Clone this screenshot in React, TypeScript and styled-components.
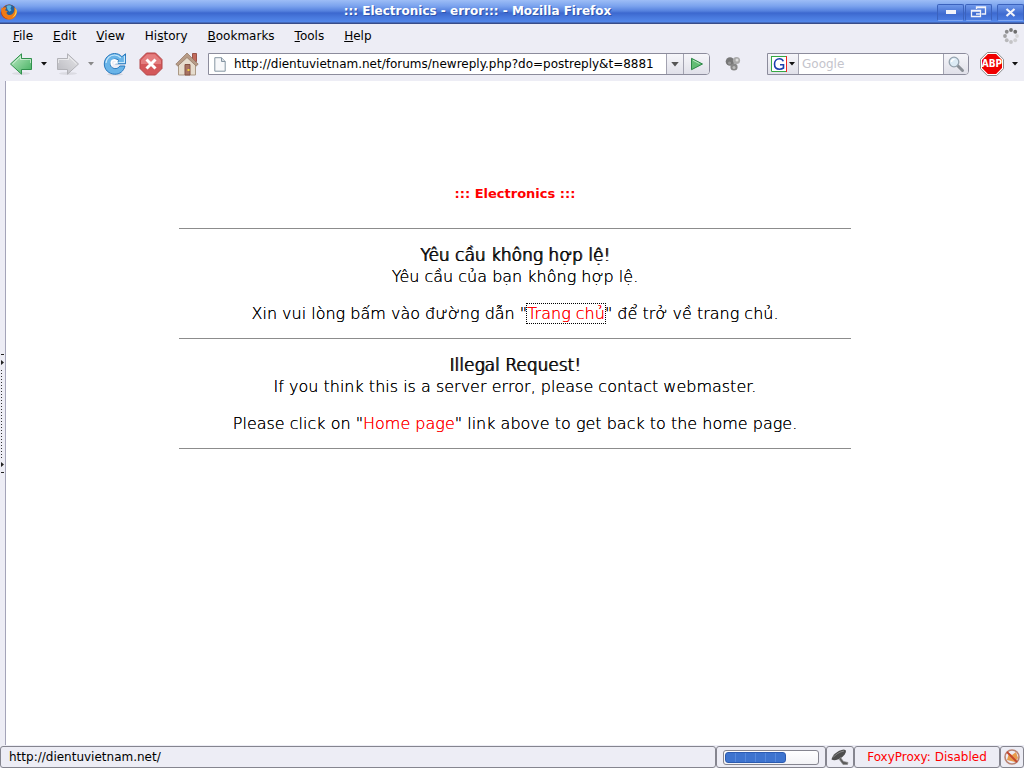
import React from "react";
import styled, { createGlobalStyle } from "styled-components";

const GlobalStyle = createGlobalStyle`
  *, *::before, *::after { box-sizing: border-box; }
  body { margin: 0; background: #ededf5; color: #000; font-family: "DejaVu Sans", sans-serif; font-size: 12px; }
  button, input { font: inherit; color: inherit; margin: 0; }
  h1, h2, p { margin: 0; font-size: inherit; }
`;

const Window = styled.div`
  display: flex;
  flex-direction: column;
  min-height: 100vh;
`;

const TitleBar = styled.header`
  display: flex;
  align-items: center;
  height: 24px;
  background: linear-gradient(#9dbdf6 0, #7ba3ee 6px, #5581de 11px, #3c68cf 13px, #4878dc 17px, #5287ea 22px, #384c88 23px);
`;

const WindowTitle = styled.h1`
  flex: 1;
  padding-bottom: 2px;
  text-align: center;
  font-size: 12px;
  line-height: 16px;
  color: #fff;
  text-shadow: 1px 1px 0 #2f55ad;
`;

const WindowButtons = styled.div`
  display: flex;
  gap: 1px;
`;

const WindowButton = styled.button<{ $gap?: boolean }>`
  display: flex;
  align-items: center;
  justify-content: center;
  width: 27px;
  height: 17px;
  margin-left: ${(p) => (p.$gap ? 4 : 0)}px;
  padding: 0;
  background: linear-gradient(#6f98ea, #3f6bd0 60%, #4c7de2);
  border: 1px solid #3b62bd;
  border-bottom-color: #7ea6f2;
  border-radius: 2px;
`;

const MenuBar = styled.nav`
  display: flex;
  align-items: center;
  height: 23px;
  padding: 0 5px 0 3px;
`;

const MenuItem = styled.button`
  padding: 0 10px;
  background: none;
  border: 0;
  line-height: 18px;
`;

const Spacer = styled.div`
  flex: 1;
`;

const ToolBar = styled.div`
  display: flex;
  align-items: center;
  height: 34px;
  padding: 0 3px 0 9px;
`;

const IconButton = styled.button<{ $w: number; $after?: number }>`
  display: flex;
  align-items: center;
  justify-content: center;
  flex: none;
  width: ${(p) => p.$w}px;
  height: 24px;
  margin-right: ${(p) => p.$after ?? 0}px;
  padding: 0;
  background: none;
  border: 0;
`;

const Field = styled.div`
  display: flex;
  align-items: stretch;
  height: 22px;
  background: #fff;
  border: 1px solid #8c8c9c;
  border-radius: 0 4px 4px 0;
  overflow: hidden;
`;

const AddressField = styled(Field)`
  flex: 1;
  margin-right: 14px;
`;

const SearchField = styled(Field)`
  width: 202px;
  margin: 0 11px 0 26px;
`;

const FieldIcon = styled.span`
  display: flex;
  align-items: center;
  justify-content: center;
  width: 22px;
`;

const TextInput = styled.input`
  flex: 1;
  min-width: 0;
  padding: 0 3px;
  background: none;
  border: 0;
  outline: 0;
  &::placeholder { color: #c4c4cc; opacity: 1; }
`;

const FieldButton = styled.button<{ $w: number; $side?: "left" }>`
  display: flex;
  align-items: center;
  justify-content: center;
  gap: 2px;
  flex: none;
  width: ${(p) => p.$w}px;
  padding: 0;
  background: linear-gradient(#f6f6fa, #e0e0e9);
  border: 0 solid #a2a2b0;
  border-width: ${(p) => (p.$side === "left" ? "0 1px 0 0" : "0 0 0 1px")};
`;

const Workspace = styled.div`
  display: flex;
  flex: 1;
`;

const SidebarGrip = styled.div`
  display: flex;
  align-items: center;
  width: 6px;
  border-right: 1px solid #a4a4b8;
`;

const Page = styled.main`
  flex: 1;
  padding-top: 104px;
  background: #fff;
  text-align: center;
`;

const Notice = styled.article`
  width: 66%;
  margin: 0 auto;
  font-family: "DejaVu Sans Light", "DejaVu Sans", sans-serif;
  font-weight: 200;
  font-size: 16px;
  line-height: 21px;
`;

const SiteName = styled.h2`
  padding-bottom: 26px;
  font-family: "DejaVu Sans", sans-serif;
  font-size: 13px;
  line-height: 17px;
  color: #f00;
`;

const Section = styled.section`
  padding: 16px 0 14px;
  border-top: 1px solid #8c8c8c;
`;

const SectionTitle = styled.h2`
  font-size: 17px;
  font-weight: 200;
  text-shadow: 0 0 0 #000, 1px 0 0 #000;
`;

const Paragraph = styled.p<{ $spaced?: boolean }>`
  margin-top: ${(p) => (p.$spaced ? 16 : 0)}px;
  text-shadow: 0 0 0 currentColor;
`;

const PageLink = styled.a<{ $focused?: boolean }>`
  color: #f00;
  text-decoration: none;
  text-shadow: 0 0 0 currentColor;
  outline: ${(p) => (p.$focused ? "1px dotted #000" : "0")};
`;

const EndRule = styled.hr`
  margin: 0;
  border: 0;
  border-top: 1px solid #8c8c8c;
`;

const StatusBar = styled.footer`
  display: flex;
  height: 23px;
  padding-top: 1px;
`;

const StatusPanel = styled.div<{ $w?: number; $alert?: boolean }>`
  display: flex;
  align-items: center;
  justify-content: ${(p) => (p.$w ? "center" : "flex-start")};
  flex: ${(p) => (p.$w ? "none" : "1")};
  width: ${(p) => (p.$w ? `${p.$w}px` : "auto")};
  padding: ${(p) => (p.$w ? "0" : "0 8px")};
  border: 1px solid #85858f;
  border-radius: 3px;
  color: ${(p) => (p.$alert ? "#f00" : "inherit")};
`;

const ProgressTrack = styled.div`
  display: flex;
  width: 96px;
  height: 15px;
  padding: 1px;
  background: linear-gradient(#fff, #f3f3f6);
  border: 1px solid #85858f;
  border-radius: 3px;
`;

const ProgressFill = styled.div`
  width: 66%;
  background: repeating-linear-gradient(90deg, #3e74cf 0 9px, #5588dc 9px 10px);
  border: 1px solid #2c5bb0;
  border-radius: 3px;
`;

const Caret = ({ color = "#111", size = 6 }: { color?: string; size?: number }) => (
  <svg width={size} height={size === 6 ? 4 : 5} viewBox="0 0 6 4"><path d="M0 0h6L3 3.6z" fill={color} /></svg>
);

const FirefoxLogo = () => (
  <svg width="18" height="18" viewBox="0 0 18 18">
    <circle cx="9" cy="9" r="7.6" fill="#c94d12" />
    <circle cx="9.4" cy="7.4" r="6" fill="#235f9c" />
    <path d="M6.500 3c2-1.300 4-.9 5 .1L10.500 5.500l1 1.800-2 1.400-2-2z" fill="#5fb5dc" />
    <path d="M1.600 4.200l1 1.200C4 4 6 4.200 6.600 4.800L5 7.200l2.800 1-1.400 1.600c.8 2.600 4 3 6 1.200 2-1.600 2.400-4.200 1.600-7 2.200 1.800 3 4.600 2.200 7.400-1 3.600-4.600 5.600-8 5-4-.6-7-4-7-8 0-1.600.2-3 .4-4.200z" fill="#ee7a16" />
    <path d="M15 5c1.400 3 .4 7.400-3 9.400 3.600-.6 5.600-4.200 4.400-7.800z" fill="#ffd84a" />
    <path d="M1.400 8c.2 4 2.600 7 6.600 8-3 .2-6.800-2.600-6.800-6.600z" fill="#b83a10" />
  </svg>
);

const Arrow = ({ forward }: { forward?: boolean }) => {
  const id = forward ? "fwd" : "back";
  return (
    <svg width="24" height="24" viewBox="0 0 24 24">
      <defs>
        <linearGradient id={id} x2="1" y2="1">
          <stop offset="0" stopColor={forward ? "#e6e6e9" : "#c0ecc7"} />
          <stop offset="1" stopColor={forward ? "#b9b9bf" : "#3fae5c"} />
        </linearGradient>
      </defs>
      <ellipse cx="12" cy="21.500" rx="9" ry="1.500" fill="#777" opacity=".15" />
      <g transform={forward ? "matrix(-1 0 0 1 24 0)" : undefined}>
        <path d="M1.500 12L12.500 1.800v4.700h10v11h-10v4.700z" fill={`url(#${id})`} stroke={forward ? "#b2b2b7" : "#31914d"} strokeLinejoin="round" />
        <path d="M3.500 12l8-7.500v3h10v3.500" fill="none" stroke="#fff" opacity=".55" />
      </g>
    </svg>
  );
};

const ReloadIcon = () => (
  <svg width="24" height="24" viewBox="0 0 24 24">
    <ellipse cx="12" cy="22.300" rx="8" ry="1.300" fill="#777" opacity=".2" />
    <path d="M22.500 1.800v10h-9.800l3.300-3.300c-1.300-1.300-3-1.700-4.700-1.300-2.700.6-4.300 3-3.900 5.500.5 2.700 3 4.300 5.700 3.900 1.600-.3 2.800-1.100 3.700-2.600h5.100c-1 5-5.200 8.400-10.200 8.200C5.800 22 1.300 17.700 1.300 12 1.300 6.300 5.800 1.700 11.500 1.500c2.800 0 5.400 1 7.400 3.200z" fill="#69b4e8" stroke="#2878bd" />
    <path d="M21.500 4v6.500h-6M3 11c.3-4.300 4-8 8.500-8 2.500 0 4.600 1 6.300 2.800" fill="none" stroke="#c9e8fa" strokeWidth="1.200" />
    <path d="M9.500 13.500a3 3 0 1 1 4.600-2.500h-3.400" fill="none" stroke="#fff" strokeWidth="1.600" />
  </svg>
);

const StopIcon = () => (
  <svg width="24" height="24" viewBox="0 0 24 24">
    <path d="M7.500 1h9L23 7.500v9L16.500 23h-9L1 16.500v-9z" fill="#d4585a" stroke="#b5484a" strokeLinejoin="round" />
    <path d="M8 2.200h8l6 6V12H2V8.200z" fill="#ee9897" opacity=".6" />
    <path d="M7.500 7.500l9 9m0-9l-9 9" stroke="#fff" strokeWidth="3" />
  </svg>
);

const HomeIcon = () => (
  <svg width="24" height="24" viewBox="0 0 24 24">
    <path d="M17.500 1.500h4v8h-4z" fill="#c26a5c" stroke="#9a5449" />
    <path d="M3.500 12L12 4l8.500 8v11h-17z" fill="#e6dccd" stroke="#ab9985" />
    <path d="M12 1L.8 12.200l2 1.800L12 5.500l9.200 8.500 2-1.800z" fill="#b79b86" stroke="#8e7260" strokeWidth=".7" />
    <path d="M10 12.500h5V23h-5z" fill="#a87261" stroke="#855345" />
    <path d="M12.500 17h2v2h-2z" fill="#f5d443" />
  </svg>
);

const DocumentIcon = () => (
  <svg width="12" height="15" viewBox="0 0 12 15">
    <path d="M.8.700h6.700l3.700 3.800v9.700H.8z" fill="#f7f8fa" stroke="#8595a2" />
    <path d="M7.500.700v3.800h3.700" fill="#d7dde2" stroke="#8595a2" />
  </svg>
);

const GoIcon = () => (
  <svg width="14" height="14" viewBox="0 0 14 14">
    <path d="M1.500 1.300L12.500 7l-11 5.700z" fill="#62bd74" stroke="#2c8747" strokeLinejoin="round" />
    <path d="M3 3.300L9.500 6.700" stroke="#b9e6c1" />
  </svg>
);

const BallsIcon = () => (
  <svg width="16" height="16" viewBox="0 0 16 16">
    <circle cx="5" cy="5.500" r="4.300" fill="#777" />
    <circle cx="11.500" cy="4.500" r="3.600" fill="#aaa" />
    <circle cx="9" cy="11" r="3.600" fill="#878787" />
    <circle cx="12" cy="4" r="1.500" fill="#ddd" />
    <circle cx="4.500" cy="7" r="1.500" fill="#999" />
    <circle cx="9" cy="11.500" r="1.500" fill="#bbb" />
  </svg>
);

const GoogleIcon = () => (
  <svg width="16" height="16" viewBox="0 0 16 16">
    <path d="M0 0h16v16H0z" fill="#fff" />
    <path d="M0 .5h15M.5 0v11" stroke="#36a843" />
    <path d="M15.500 0v16" stroke="#e22" />
    <path d="M.5 11v4.500H15" fill="none" stroke="#36a843" />
    <path d="M12.300 5.200C11.600 3.500 10.400 2.700 8.500 2.700 5.500 2.700 3.500 4.900 3.500 8s2 5.200 5 5.200c1.500 0 2.800-.4 4-1.200V8.700H9" fill="none" stroke="#1c3fae" strokeWidth="1.600" />
  </svg>
);

const SearchIcon = () => (
  <svg width="18" height="18" viewBox="0 0 18 18">
    <path d="M10.500 10.500l5 5" stroke="#8a8f96" strokeWidth="3" strokeLinecap="round" />
    <circle cx="7" cy="7" r="4.800" fill="#dcebf5" stroke="#95a3ae" strokeWidth="1.300" />
    <path d="M4.500 7C4.600 5.400 5.800 4.400 7.500 4.400" fill="none" stroke="#fff" strokeWidth="1.400" />
  </svg>
);

const AbpShape = styled.span`
  display: grid;
  place-items: center;
  svg, span { grid-area: 1 / 1; }
  span { z-index: 1; color: #fff; font: bold 10px/24px "DejaVu Sans Condensed", "DejaVu Sans", sans-serif; }
`;

const AbpIcon = () => (
  <AbpShape>
    <svg width="24" height="24" viewBox="0 0 24 24">
      <path d="M7.300.500h9.400l6.800 6.800v9.400l-6.800 6.800H7.300L.5 16.700V7.300z" fill="#fff" stroke="#888" />
      <path d="M7.900 2h8.200L22 7.900v8.200L16.100 22H7.900L2 16.100V7.900z" fill="#f00000" />
    </svg>
    <span>ABP</span>
  </AbpShape>
);

const Throbber = () => (
  <svg width="16" height="16" viewBox="0 0 16 16">
    {["#777", "#6e6e6e", "#d6d6d8", "#cfcfd1", "#c4c4c6", "#b8b8ba", "#a2a2a4", "#8b8b8d"].map((fill, i) => {
      const a = ((i * 45 - 90) * Math.PI) / 180;
      return <circle key={i} cx={8 + 6 * Math.cos(a)} cy={8 + 6 * Math.sin(a)} r="1.900" fill={fill} />;
    })}
  </svg>
);

const MinimizeGlyph = () => <svg width="10" height="4"><path d="M0 0h10v4H0z" fill="#f2f3fa" /></svg>;

const RestoreGlyph = () => (
  <svg width="17" height="12" viewBox="0 0 17 12">
    <path d="M6.500 3V1h9v7h-4M6 1.500h10" fill="none" stroke="#f2f3fa" strokeWidth="1.300" />
    <path d="M1.500 4.500h9v6h-9zM1 5h10M6 8h5" fill="none" stroke="#f2f3fa" strokeWidth="1.300" />
  </svg>
);

const CloseGlyph = () => (
  <svg width="11" height="9" viewBox="0 0 11 9"><path d="M1.500 1l8 7m0-7l-8 7" stroke="#f2f3fa" strokeWidth="2.200" /></svg>
);

const GripDrawing = () => (
  <svg width="5" height="120" viewBox="0 0 5 120">
    <path d="M1 1.500h3M1 119.500h3" stroke="#222" />
    <path d="M1 7v5l3-2.500zM1 109v5l3-2.500z" fill="#222" />
    <path d="M1.500 17v88" stroke="#333" strokeDasharray="1 2" />
  </svg>
);

const SatelliteIcon = () => (
  <svg width="20" height="18" viewBox="0 0 20 18">
    <path d="M1.500 11.500C2.500 7 7 2.500 14 1.500l2 1c.2 2.500-2 5.500-5 7.500-3 2-7 3-9.500 1.500z" fill="#4d4d4d" />
    <path d="M3 9.500c3-3.500 6.500-5.500 11-6.500" fill="none" stroke="#888" />
    <path d="M10.500 9.500l3 4 4.500 1-.5 2h-4.500l-4-5.500z" fill="#5c5c5c" stroke="#8a8a8a" strokeWidth=".7" />
  </svg>
);

const BlockedIcon = () => (
  <svg width="18" height="18" viewBox="0 0 18 18">
    <path d="M4 12l2-7 3 2 4-3 2 6-3 4z" fill="#e99b4c" />
    <circle cx="9" cy="9" r="7" fill="none" stroke="#b98373" strokeWidth="1.600" />
    <path d="M4 4l10 10" stroke="#c4452d" strokeWidth="1.800" />
  </svg>
);

const MENUS: [string, string, string][] = [
  ["", "F", "ile"],
  ["", "E", "dit"],
  ["", "V", "iew"],
  ["Hi", "s", "tory"],
  ["", "B", "ookmarks"],
  ["", "T", "ools"],
  ["", "H", "elp"],
];

export default function App() {
  return (
    <Window>
      <GlobalStyle />
      <TitleBar>
        <FirefoxLogo />
        <WindowTitle>::: Electronics - error::: - Mozilla Firefox</WindowTitle>
        <WindowButtons>
          <WindowButton aria-label="Minimize"><MinimizeGlyph /></WindowButton>
          <WindowButton aria-label="Restore"><RestoreGlyph /></WindowButton>
          <WindowButton aria-label="Close" $gap><CloseGlyph /></WindowButton>
        </WindowButtons>
      </TitleBar>

      <MenuBar>
        {MENUS.map(([before, key, after]) => (
          <MenuItem key={key + after}>{before}<u>{key}</u>{after}</MenuItem>
        ))}
        <Spacer />
        <Throbber />
      </MenuBar>

      <ToolBar>
        <IconButton $w={24} $after={5} aria-label="Back"><Arrow /></IconButton>
        <IconButton $w={12} $after={6} aria-label="Back history"><Caret /></IconButton>
        <IconButton $w={24} $after={5} aria-label="Forward"><Arrow forward /></IconButton>
        <IconButton $w={12} $after={6} aria-label="Forward history"><Caret color="#888" /></IconButton>
        <IconButton $w={24} $after={12} aria-label="Reload"><ReloadIcon /></IconButton>
        <IconButton $w={24} $after={12} aria-label="Stop"><StopIcon /></IconButton>
        <IconButton $w={24} $after={9} aria-label="Home"><HomeIcon /></IconButton>
        <AddressField>
          <FieldIcon><DocumentIcon /></FieldIcon>
          <TextInput
            aria-label="Address"
            defaultValue="http://dientuvietnam.net/forums/newreply.php?do=postreply&t=8881"
          />
          <FieldButton $w={17} aria-label="Show addresses"><Caret color="#555" size={8} /></FieldButton>
          <FieldButton $w={26} aria-label="Go"><GoIcon /></FieldButton>
        </AddressField>
        <IconButton $w={17} aria-label="Add-on"><BallsIcon /></IconButton>
        <SearchField>
          <FieldButton $w={31} $side="left" aria-label="Search engine"><GoogleIcon /><Caret /></FieldButton>
          <TextInput aria-label="Search" placeholder="Google" />
          <FieldButton $w={25} aria-label="Search the web"><SearchIcon /></FieldButton>
        </SearchField>
        <IconButton $w={24} $after={5} aria-label="Adblock Plus"><AbpIcon /></IconButton>
        <IconButton $w={12} aria-label="Adblock Plus options"><Caret /></IconButton>
      </ToolBar>

      <Workspace>
        <SidebarGrip><GripDrawing /></SidebarGrip>
        <Page>
          <Notice>
            <SiteName>::: Electronics :::</SiteName>
            <Section>
              <SectionTitle>Yêu cầu không hợp lệ!</SectionTitle>
              <Paragraph>Yêu cầu của bạn không hợp lệ.</Paragraph>
              <Paragraph $spaced>
                Xin vui lòng bấm vào đường dẫn "<PageLink href="#home" $focused>Trang chủ</PageLink>" để trở về trang chủ.
              </Paragraph>
            </Section>
            <Section>
              <SectionTitle>Illegal Request!</SectionTitle>
              <Paragraph>If you think this is a server error, please contact webmaster.</Paragraph>
              <Paragraph $spaced>
                Please click on "<PageLink href="#home">Home page</PageLink>" link above to get back to the home page.
              </Paragraph>
            </Section>
            <EndRule />
          </Notice>
        </Page>
      </Workspace>

      <StatusBar>
        <StatusPanel>http://dientuvietnam.net/</StatusPanel>
        <StatusPanel $w={110}><ProgressTrack><ProgressFill /></ProgressTrack></StatusPanel>
        <StatusPanel $w={28}><SatelliteIcon /></StatusPanel>
        <StatusPanel $w={146} $alert>FoxyProxy: Disabled</StatusPanel>
        <StatusPanel $w={24}><BlockedIcon /></StatusPanel>
      </StatusBar>
    </Window>
  );
}
